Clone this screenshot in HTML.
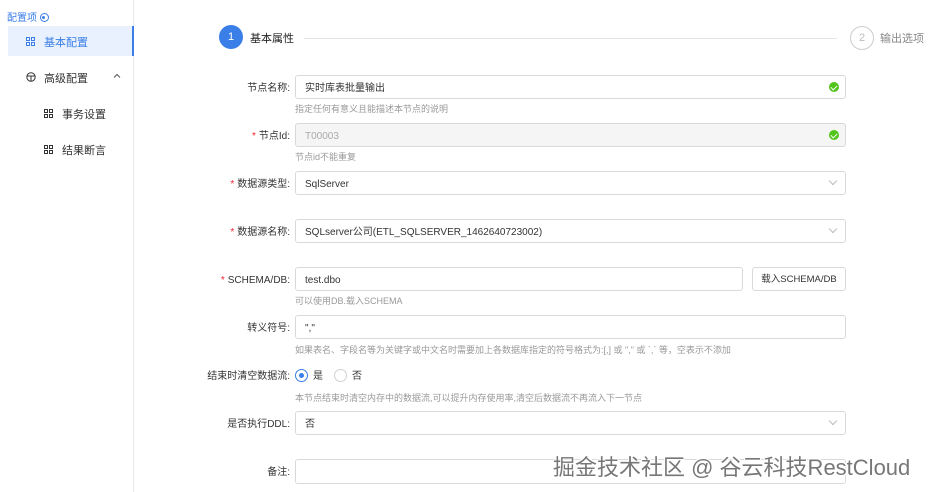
<!DOCTYPE html>
<html><head><meta charset="utf-8"><style>
*{box-sizing:border-box;margin:0;padding:0}
body{width:930px;height:492px;overflow:hidden;background:#fff;font-family:"Liberation Sans","Noto Sans CJK SC",sans-serif;font-size:10px;color:#333;position:relative}
.a{position:absolute;white-space:nowrap}
.lbl{position:absolute;right:640px;font-size:10px;line-height:12px;color:#333;text-align:right;white-space:nowrap;margin-top:2px}
.req{color:#f5222d;margin-right:3px}
.inp{position:absolute;left:295px;width:551px;height:24px;border:1px solid #d9d9d9;border-radius:3px;padding-left:9px;padding-top:3px;display:flex;align-items:center;font-size:10px;line-height:12px;color:#333;background:#fff}
.hint{position:absolute;left:295px;font-size:9px;color:#999;white-space:nowrap}
.ok{position:absolute;right:6px;top:6px;width:10px;height:10px;border-radius:50%;background:#52c41a}
.ok:after{content:"";position:absolute;left:3px;top:2px;width:3px;height:5px;border:solid #fff;border-width:0 1.3px 1.3px 0;transform:rotate(45deg)}
.arr{position:absolute;right:9px;top:6px;width:6px;height:6px;border:solid #bbb;border-width:0 1px 1px 0;transform:rotate(45deg)}
</style></head><body>
<div class="a" style="left:7px;top:9px;font-size:10px;color:#3a7ee8">配置项 <span style="display:inline-block;width:9px;height:9px;border:1.5px solid #3a7ee8;border-radius:50%;vertical-align:-1px;position:relative"><span style="position:absolute;left:1.5px;top:1.5px;width:3px;height:3px;border-radius:50%;background:#3a7ee8"></span></span></div>
<div class="a" style="left:133px;top:0;width:1px;height:492px;background:#e8e8e8"></div>
<div class="a" style="left:8px;top:26px;width:126px;height:30px;background:#e8f1fd;border-right:2px solid #3a7ee8"></div>
<svg class="a" style="left:26px;top:37px" width="9" height="9" viewBox="0 0 9 9" fill="none" stroke="#3a7ee8" stroke-width="1"><rect x=".5" y=".5" width="3" height="3"/><rect x="5.5" y=".5" width="3" height="3"/><rect x=".5" y="5.5" width="3" height="3"/><rect x="5.5" y="5.5" width="3" height="3"/></svg>
<div class="a" style="left:44px;top:34px;font-size:11px;color:#3a7ee8">基本配置</div>
<svg class="a" style="left:26px;top:72px" width="10" height="10" viewBox="0 0 10 10" fill="none" stroke="#333" stroke-width="1"><circle cx="5" cy="5" r="4.2"/><path d="M1 4h8M5 4v5.5"/></svg>
<div class="a" style="left:44px;top:70px;font-size:11px">高级配置</div>
<svg class="a" style="left:113px;top:73px" width="8" height="5" viewBox="0 0 8 5" fill="none" stroke="#555"><path d="M1 4.5L4 1.5L7 4.5"/></svg>
<svg class="a" style="left:44px;top:109px" width="9" height="9" viewBox="0 0 9 9" fill="none" stroke="#333" stroke-width="1"><rect x=".5" y=".5" width="3" height="3"/><rect x="5.5" y=".5" width="3" height="3"/><rect x=".5" y="5.5" width="3" height="3"/><rect x="5.5" y="5.5" width="3" height="3"/></svg>
<div class="a" style="left:62px;top:106px;font-size:11px">事务设置</div>
<svg class="a" style="left:44px;top:145px" width="9" height="9" viewBox="0 0 9 9" fill="none" stroke="#333" stroke-width="1"><rect x=".5" y=".5" width="3" height="3"/><rect x="5.5" y=".5" width="3" height="3"/><rect x=".5" y="5.5" width="3" height="3"/><rect x="5.5" y="5.5" width="3" height="3"/></svg>
<div class="a" style="left:62px;top:142px;font-size:11px">结果断言</div>
<div class="a" style="left:219px;top:25px;width:24px;height:24px;border-radius:50%;background:#3a7ee8;color:#fff;text-align:center;line-height:24px;font-size:11px">1</div>
<div class="a" style="left:250px;top:30px;font-size:11px;color:#222">基本属性</div>
<div class="a" style="left:304px;top:38px;width:533px;height:1px;background:#e5e5e5"></div>
<div class="a" style="left:850px;top:26px;width:24px;height:24px;border-radius:50%;border:1px solid #ccc;color:#bbb;text-align:center;line-height:22px;font-size:11px">2</div>
<div class="a" style="left:880px;top:30px;font-size:11px;color:#888">输出选项</div>
<div class="lbl" style="top:81px">节点名称:</div>
<div class="inp" style="top:75px">实时库表批量输出<span class="ok"></span></div>
<div class="hint" style="top:102px">指定任何有意义且能描述本节点的说明</div>
<div class="lbl" style="top:129px"><span class="req">*</span>节点Id:</div>
<div class="inp" style="top:123px;background:#f5f5f5;color:#aaa">T00003<span class="ok"></span></div>
<div class="hint" style="top:150px">节点id不能重复</div>
<div class="lbl" style="top:177px"><span class="req">*</span>数据源类型:</div>
<div class="inp" style="top:171px">SqlServer<span class="arr"></span></div>
<div class="lbl" style="top:225px"><span class="req">*</span>数据源名称:</div>
<div class="inp" style="top:219px">SQLserver公司(ETL_SQLSERVER_1462640723002)<span class="arr"></span></div>
<div class="lbl" style="top:273px"><span class="req">*</span>SCHEMA/DB:</div>
<div class="inp" style="top:267px;width:448px">test.dbo</div>
<div class="a" style="left:752px;top:267px;width:94px;height:24px;border:1px solid #d9d9d9;border-radius:3px;text-align:center;line-height:24px;font-size:9.5px">载入SCHEMA/DB</div>
<div class="hint" style="top:294px">可以使用DB.载入SCHEMA</div>
<div class="lbl" style="top:321px">转义符号:</div>
<div class="inp" style="top:315px">","</div>
<div class="hint" style="top:343px">如果表名、字段名等为关键字或中文名时需要加上各数据库指定的符号格式为:[,] 或 "," 或 `,` 等，空表示不添加</div>
<div class="lbl" style="top:369px">结束时清空数据流:</div>
<div class="a" style="left:295px;top:369px;width:13px;height:13px;border-radius:50%;border:1px solid #3a7ee8"><span style="position:absolute;left:3px;top:3px;width:5px;height:5px;border-radius:50%;background:#3a7ee8"></span></div>
<div class="a" style="left:313px;top:371px;font-size:10px;line-height:12px">是</div>
<div class="a" style="left:334px;top:369px;width:13px;height:13px;border-radius:50%;border:1px solid #d0d0d0"></div>
<div class="a" style="left:352px;top:371px;font-size:10px;line-height:12px">否</div>
<div class="hint" style="top:391px">本节点结束时清空内存中的数据流,可以提升内存使用率,清空后数据流不再流入下一节点</div>
<div class="lbl" style="top:417px">是否执行DDL:</div>
<div class="inp" style="top:411px">否<span class="arr"></span></div>
<div class="lbl" style="top:465px">备注:</div>
<div class="inp" style="top:459px;height:25px"></div>
<div class="a" style="left:553px;top:450px;font-size:22px;color:#777;text-shadow:1px 1px 0 #fff,-1px -1px 0 #fff,1px -1px 0 #fff,-1px 1px 0 #fff">掘金技术社区 @ 谷云科技RestCloud</div>
</body></html>
